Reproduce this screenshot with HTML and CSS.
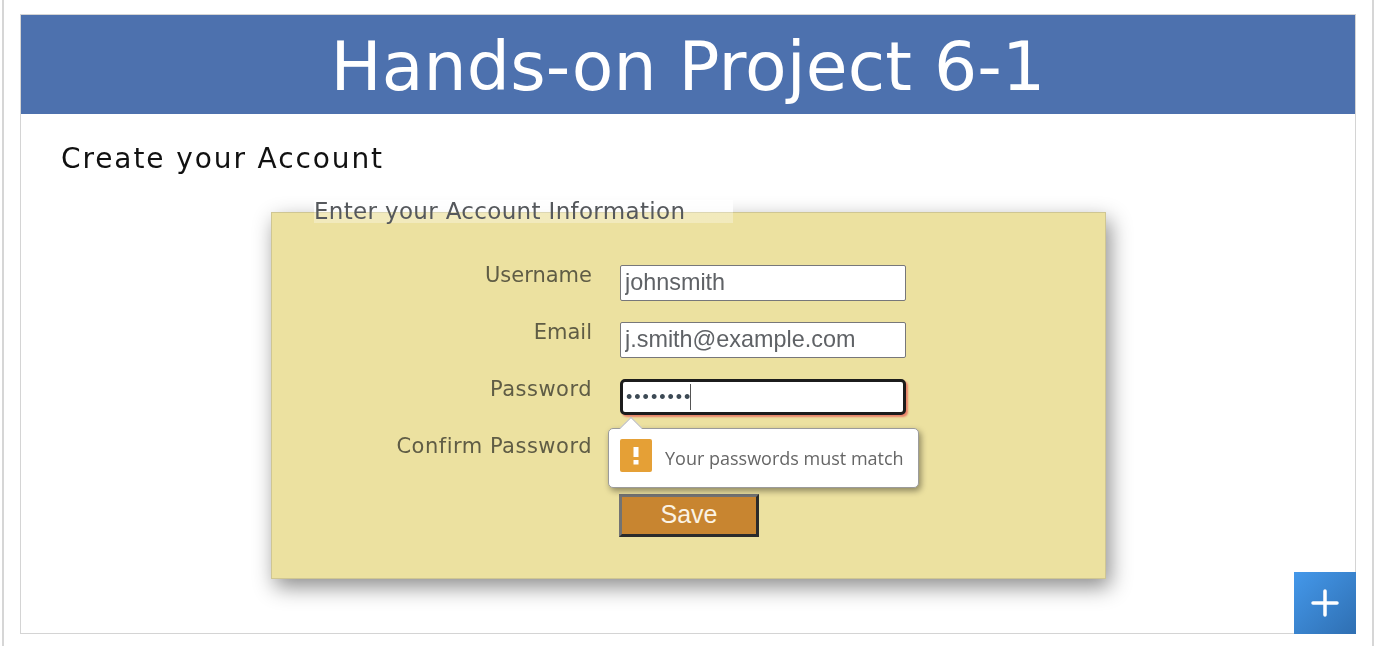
FILE: index.html
```html
<!DOCTYPE html>
<html lang="en">
<head>
<meta charset="utf-8">
<title>Hands-on Project 6-1</title>
<link rel="stylesheet" href="styles.css">
</head>
<body>
<div class="frame">
  <div class="figure">
    <header class="banner"><h1>Hands-on Project 6-1</h1></header>
    <main class="content">
      <h2>Create your Account</h2>
      <form class="panel">
        <div class="legend">Enter your Account Information</div>
        <div class="fields">
          <label class="lab tight">Username</label>
          <input class="inp" type="text" value="johnsmith">
          <label class="lab tight">Email</label>
          <input class="inp" type="text" value="j.smith@example.com">
          <label class="lab">Password</label>
          <div class="pw-wrap">
            <div class="inp focus"><span class="dots">••••••••</span><span class="caret"></span></div>
            <div class="tip">
              <span class="tip-arrow"></span>
              <svg class="warn" width="32" height="33" viewBox="0 0 32 33"><rect width="32" height="33" rx="2" fill="#e5a036"/><rect x="13.500" y="8" width="5" height="10" fill="#fff"/><rect x="13.500" y="21" width="5" height="4.500" fill="#fff"/></svg>
              <span class="tip-text">Your passwords must match</span>
            </div>
          </div>
          <label class="lab">Confirm Password</label>
          <input class="inp" type="text">
          <span></span>
          <button class="save" type="button">Save</button>
        </div>
      </form>
    </main>
    <button class="plus" type="button" aria-label="Expand">
      <svg width="28" height="28" viewBox="0 0 28 28"><path d="M14 2V26M2 14H26" stroke="#fff" stroke-width="3.500" stroke-linecap="round" fill="none"/></svg>
    </button>
  </div>
</div>
</body>
</html>
```
FILE: styles.css
```css
* { box-sizing: border-box; }
html, body { margin: 0; height: 646px; overflow: hidden; background: #fff; }
.frame {
  height: 646px;
  margin: 0 2px;
  padding: 14px 16px 12px 16px;
  border-left: 2px solid #d6d6d6;
  border-right: 2px solid #d6d6d6;
}
.figure {
  position: relative;
  height: 620px;
  border: 1px solid #d4d4d4;
  background: #fff;
}
.banner { height: 99px; padding-top: 5px; background: #4d71ae; display: flex; align-items: center; justify-content: center; filter: blur(.4px); }
.banner h1 {
  margin: 0;
  font: 400 68px/1 "DejaVu Sans", sans-serif;
  color: #fff;
  letter-spacing: .15px;
}
.content { padding: 27px 0 0 40px; filter: blur(.4px); }
.content h2 {
  margin: 0;
  font: 400 28px/36px "DejaVu Sans", sans-serif;
  letter-spacing: 1.900px;
  color: #111;
}
.panel {
  position: relative;
  width: 835px;
  height: 367px;
  margin: 35px 0 0 210px;
  background: #ece1a0;
  border: 1px solid #cfc693;
  box-shadow: 4px 8px 20px rgba(0,0,0,.45);
}
.legend {
  position: absolute;
  top: -13px;
  left: 42px;
  width: 419px;
  height: 23px;
  font: 400 23px/23px "DejaVu Sans", sans-serif;
  letter-spacing: .33px;
  color: #55585c;
  white-space: nowrap;
  background: linear-gradient(to bottom, rgba(255,255,255,.85) 12px, rgba(255,255,255,.3) 12px);
}
.fields {
  display: grid;
  grid-template-columns: 320px 286px;
  grid-auto-rows: 36px;
  row-gap: 21px;
  column-gap: 28px;
  padding-top: 52px;
}
.lab {
  font: 400 21px/20px "DejaVu Sans", sans-serif;
  letter-spacing: .5px;
  color: #5f5c45;
  text-align: right;
  white-space: nowrap;
}
.tight { letter-spacing: 0; }
.inp {
  display: block;
  width: 286px;
  height: 36px;
  padding: 0 4px 2px;
  border: 1px solid #77777a;
  border-radius: 2px;
  background: #fff;
  font: 400 23.400px/32px "Liberation Sans", sans-serif;
  color: #5f6266;
  outline: none;
}
.pw-wrap { position: relative; }
.focus {
  display: flex;
  align-items: center;
  padding: 0 3px;
  border: 3px solid #1c1c1c;
  border-radius: 5px;
  box-shadow: 2px 2px 2px #e8826a;
}
.dots { font: 400 18px/1 "Liberation Sans", sans-serif; color: #3d4a55; letter-spacing: 2px; }
.caret { width: 1px; height: 26px; background: #555; margin-left: -2px; }
.tip {
  position: absolute;
  z-index: 2;
  top: 49px;
  left: -12px;
  width: 311px;
  height: 60px;
  display: flex;
  align-items: center;
  gap: 13px;
  padding-left: 11px;
  background: #fff;
  border: 1px solid #9b9b9b;
  border-radius: 5px;
  box-shadow: 2px 3px 6px rgba(0,0,0,.4);
}
.tip-arrow {
  position: absolute;
  top: -9px;
  left: 14px;
  width: 16px;
  height: 16px;
  background: #fff;
  border-top: 1px solid #bbb;
  border-left: 1px solid #bbb;
  transform: rotate(45deg);
}
.warn { flex: none; margin-bottom: 6px; }
.tip-text {
  font: 400 18px/1 "Open Sans", sans-serif;
  color: #666;
  white-space: nowrap;
}
.save {
  width: 140px;
  height: 43px;
  margin-top: 1px;
  margin-left: -1px;
  padding: 0 0 2px;
  background: #c88530;
  border: 3px solid;
  border-color: #737373 #2b2b2b #2b2b2b #737373;
  color: #fbf3e4;
  font: 400 25px/1 "Liberation Sans", sans-serif;
}
.plus {
  position: absolute;
  right: -1px;
  bottom: -1px;
  width: 62px;
  height: 62px;
  padding: 0;
  border: 0;
  background: linear-gradient(135deg, #4498ea, #2f6fb2);
  display: flex;
  align-items: center;
  justify-content: center;
}
```
